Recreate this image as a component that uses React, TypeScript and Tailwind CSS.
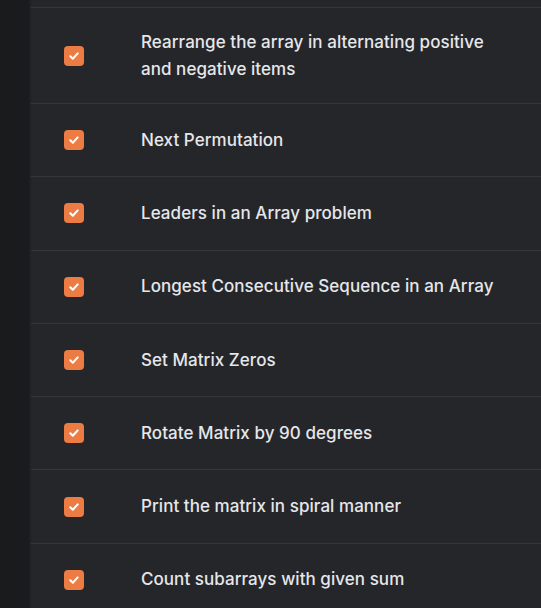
import React from "react";

interface Problem {
  id: number;
  title: React.ReactNode;
}

const problems: Problem[] = [
  {
    id: 1,
    title: (
      <>
        Rearrange the array in alternating positive
        <br />
        and negative items
      </>
    ),
  },
  { id: 2, title: "Next Permutation" },
  { id: 3, title: "Leaders in an Array problem" },
  { id: 4, title: "Longest Consecutive Sequence in an Array" },
  { id: 5, title: "Set Matrix Zeros" },
  { id: 6, title: "Rotate Matrix by 90 degrees" },
  { id: 7, title: "Print the matrix in spiral manner" },
  { id: 8, title: "Count subarrays with given sum" },
];

const CheckBox: React.FC = () => (
  <div className="w-5 h-5 shrink-0 rounded-[4px] bg-[#ec7b44] flex items-center justify-center">
    <svg width="12" height="12" viewBox="0 0 12 12" fill="none">
      <path
        d="M2.3 6.3 4.8 8.7 9.7 3.4"
        stroke="#fff"
        strokeWidth="2.1"
        strokeLinecap="round"
        strokeLinejoin="round"
      />
    </svg>
  </div>
);

const App: React.FC = () => {
  return (
    <div
      className="w-[541px] h-[608px] overflow-hidden flex bg-[#1b1c1e]"
      style={{ fontFamily: "Inter, 'Noto Sans', sans-serif" }}
    >
      <div className="w-[29px] shrink-0 bg-[#1a1b1d]" />
      <div className="w-[2px] shrink-0 bg-[#1f2023]" />
      <div className="flex-1 bg-[#25262a]">
        <div className="h-[7px]" />
        {problems.map((p) => (
          <div
            key={p.id}
            className="flex items-center border-t border-[#36373b] min-h-[73.3px] py-[20.5px] pl-[33px] pr-4"
          >
            <CheckBox />
            <div className="ml-[57px] text-[17px] leading-[27px] font-medium text-[#e6e7ea] tracking-[0.05px]">
              {p.title}
            </div>
          </div>
        ))}
      </div>
    </div>
  );
};

export default App;
